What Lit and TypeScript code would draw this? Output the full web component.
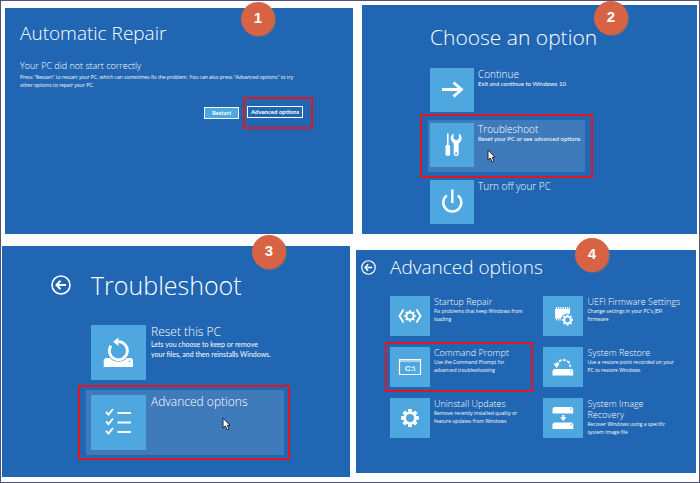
import { LitElement, html, svg, css, TemplateResult } from "lit";
import { customElement } from "lit/decorators.js";
import { classMap } from "lit/directives/class-map.js";

const gearPath = (cx: number, cy: number, r: number, tooth: number, hole: number) => {
  const pts: string[] = [];
  for (let i = 0; i < 8; i++) {
    const a = (i * Math.PI) / 4;
    [[-0.3, r], [-0.2, r + tooth], [0.2, r + tooth], [0.3, r]].forEach(([d, q]) =>
      pts.push(`${(cx + q * Math.sin(a + d)).toFixed(2)} ${(cy - q * Math.cos(a + d)).toFixed(2)}`));
  }
  return `M${pts.join("L")}ZM${cx - hole} ${cy}a${hole} ${hole} 0 1 0 ${2 * hole} 0a${hole} ${hole} 0 1 0 ${-2 * hole} 0Z`;
};

const drive = (y: number) => svg`<path d="M11 ${y}h18l1.200 1.800v4.700H9.500v-4.700z" fill="#fff"/>
  <circle cx="28" cy="${y + 2.3}" r=".7" fill="#4ea7de"/>`;

const icons: Record<string, TemplateResult> = {
  arrow: svg`<path d="M12 21.500H31.500M23.500 14.500l8 7-8 7" fill="none" stroke="#fff" stroke-width="2.800"/>`,
  tools: svg`<path fill="#fff" d="M17 10.500h1.600v11h-1.600zM15.500 23q0-1.500 2.300-1.500t2.300 1.500v8.500q0 1.200-1.200 1.200h-2.200q-1.200 0-1.200-1.200z"/>
    <path fill="#fff" fill-rule="evenodd" d="M23.500 10.500v5l2.700 2 2.700-2v-5q2.800 1.500 2.800 5 0 3-3 5v10q0 2.500-2.500 2.500t-2.500-2.500v-10q-3-2-3-5 0-3.500 2.800-5zM26.200 29.200a1.200 1.200 0 1 0 .01 0z"/>`,
  power: svg`<path d="M22.300 9.500v13.500M16.800 15.400a9 9 0 1 0 11 0" fill="none" stroke="#fff" stroke-width="2.400"/>`,
  reset: svg`<path d="M14.500 33h26l1.500 2v7H12.700v-7z" fill="#fff"/>
    <circle cx="27.300" cy="25.500" r="11.300" fill="#4ea7de"/>
    <path d="M27.500 16.700a9 9 0 1 1-7.600 4" fill="none" stroke="#fff" stroke-width="2.800"/><path d="M22 16.700l5.500-4.200v8.400z" fill="#fff"/>
    <circle cx="38.500" cy="36.300" r=".8" fill="#4ea7de"/>`,
  checklist: svg`<path d="M15 17l2.500 2.500 4.500-5.500M15 26.500l2.500 2.500 4.500-5.500M15 36l2.500 2.500 4.500-5.500M26.500 18H40M26.500 27.500H40M26.500 37H40" fill="none" stroke="#fff" stroke-width="1.900"/>`,
  repair: svg`<path d="M13.500 13.500l-4 6.500 4 6.500M26.500 13.500l4 6.500-4 6.500" fill="none" stroke="#fff" stroke-width="2"/>
    <path d="${gearPath(20, 20, 4.3, 1.500, 2.600)}" fill="#fff" fill-rule="evenodd"/>`,
  prompt: svg`<path d="M9.500 12.500h21v15h-21zM9.500 14h21" fill="none" stroke="#fff" stroke-width="1.200"/>
    <text x="20" y="24" text-anchor="middle" font-family="Liberation Sans" font-weight="700" font-size="8" fill="#fff">C:\\</text>`,
  gear: svg`<path d="${gearPath(20, 20, 6.600, 2.500, 4)}" fill="#fff" fill-rule="evenodd"/>`,
  firmware: svg`<path d="M12 13h15v9.500H12z" fill="#fff"/><path d="M13 12h14M13 23.500h8" stroke="#fff" stroke-width="2" stroke-dasharray="1.200 1"/>
    <circle cx="24.500" cy="24" r="6.500" fill="#4ea7de"/><path d="${gearPath(24.500, 24, 4, 1.600, 2.400)}" fill="#fff" fill-rule="evenodd"/>`,
  restore: svg`${drive(22)}<path d="M13.500 18a7 6.500 0 0 1 13.800 2" fill="none" stroke="#fff" stroke-width="1.800" stroke-dasharray="3 1.300"/>
    <path d="M10.500 16.500h6.200l-3.100 4.500z" fill="#fff"/>`,
  image: svg`${drive(9)}${drive(24.500)}<path d="M19.300 17h2v2.200h2.200l-3.200 3.800-3.200-3.800h2.200z" fill="#fff"/>`,
};

interface Option { icon: string; title: string; text?: string; marked?: boolean; pointer?: boolean }

@customElement("app-root")
export class AppRoot extends LitElement {
  static styles = css`
    :host { display: block; font-family: "Open Sans", "Noto Sans", sans-serif; color: #fff; }
    * { box-sizing: border-box; }
    h1, h2, p { margin: 0; font-weight: 300; }
    button { font: inherit; color: inherit; border: 0; background: none; padding: 0; text-align: left; }
    .frame { border: 1px solid #50527c; background: #fff; }
    .row { display: grid; }
    .upper { grid-template-columns: 348fr 335fr; gap: 9px; padding: 4px 2px 0 4px; }
    .lower { grid-template-columns: 348fr 340fr; gap: 6px; padding: 12px 3px 5px 1px; }
    .panel { position: relative; background: #2066b2; min-width: 0; }
    .badge { position: absolute; width: 34px; height: 34px; border-radius: 50%; background: #d86344; box-shadow: 1px 1px 1px #6b6b7a; font: 700 15px/32px "Liberation Sans", sans-serif; text-align: center; }
    .p1 { margin-top: 3px; padding: 13px 15px; }
    .p1 .badge { left: 236px; top: -6px; }
    .p1 h1 { font-size: 19px; line-height: 24px; }
    .p1 h2 { font-size: 9px; line-height: 14px; margin-top: 14px; }
    .p1 p { font-size: 5px; line-height: 8px; font-weight: 400; white-space: pre-line; }
    .actions { display: flex; align-items: center; margin: 8px 0 0 184px; gap: 4px; }
    .actions button { height: 12px; border: 1px solid #fff; font: 700 6px/8px Lato, sans-serif; text-align: center; }
    .restart { width: 35px; }
    .actions .restart { background: #4ea7de; }
    .more { width: 56px; }
    .ring { border: 2px solid #e3161f; }
    .actions .ring { padding: 7px 8px 9px 2px; display: flex; }

    .options { display: flex; flex-direction: column; align-items: flex-start; }
    .option { display: flex; position: relative; }
    .icon { flex: none; background: #4ea7de; display: block; }
    .name { display: block; font-weight: 300; white-space: pre-line; }
    .text { display: block; font-family: Lato, sans-serif; font-weight: 400; white-space: pre-line; }
    .pointer { position: absolute; }

    .p2 { padding: 18px 0 10px 58px; }
    .p2 .badge { left: 232px; top: -4px; }
    .p2 h1 { font-size: 21px; line-height: 28px; padding-left: 10px; }
    .p2 .options { margin-top: 17px; gap: 2px; }
    .p2 .option { margin-left: 10px; gap: 4px; }
    .p2 .icon { width: 44px; height: 44px; }
    .p2 .name { font-size: 10px; line-height: 12px; }
    .p2 .text { font-size: 6px; line-height: 8px; }
    .p2 .ring { padding: 4px 6px; }
    .p2 .ring .option { margin: 0; width: 157px; padding: 3px 2px 5px; background: #3f7abb; }
    .p2 .pointer { left: 59px; top: 29px; }

    .p3 { padding: 22px 0 17px 49px; }
    .p3 .badge { left: 250px; top: -11px; }
    .head { display: flex; align-items: center; }
    .back { display: flex; }
    .p3 .head { gap: 20px; }
    .p3 .back svg { width: 20px; height: 20px; }
    .p3 h1 { font-size: 25px; line-height: 34px; }
    .p3 .options { margin: 23px 0 0 27px; gap: 5px; }
    .p3 .option { margin-left: 13px; gap: 5px; }
    .p3 .icon { width: 55px; height: 55px; }
    .p3 .name { font-size: 12px; line-height: 14px; }
    .p3 .text { font-size: 7px; line-height: 10px; }
    .p3 .ring { padding: 3px 4px 3px 6px; }
    .p3 .ring .option { margin: 0; width: 198px; padding: 5px; background: #3f7abb; }
    .p3 .pointer { left: 136px; top: 27px; }

    .p4 { margin: 4px 0; padding: 4px 0 31px 5px; }
    .p4 .badge { left: 219px; top: -12px; }
    .p4 .head { gap: 14px; }
    .p4 .back svg { width: 15px; height: 15px; }
    .p4 h1 { font-size: 19px; line-height: 26px; }
    .columns { display: grid; grid-template-columns: 152fr 156fr; margin: 16px 0 0 24px; }
    .p4 .options { gap: 11px; }
    .p4 .option { margin-left: 5px; gap: 4px; }
    .p4 .icon { width: 40px; height: 40px; }
    .p4 .name { font-size: 9px; line-height: 11px; }
    .p4 .text { font-family: "Open Sans", sans-serif; font-size: 5px; line-height: 8px; }
    .p4 .ring { padding: 3px; margin: -5px 0; }
    .p4 .ring .option { margin: 0; width: 138px; }
  `;

  private option(o: Option, size: number) {
    const button = html`<button class="option">
      <svg class="icon" viewBox="0 0 ${size} ${size}" aria-hidden="true">${icons[o.icon]}</svg>
      <span><span class="name">${o.title}</span>${o.text ? html`<span class="text">${o.text}</span>` : ""}</span>
      ${o.pointer ? html`<svg class="pointer" width="9" height="14" viewBox="0 0 9 14" aria-hidden="true">
        <path d="M1 1v10l2.300-2 1.800 4 1.900-.9-1.800-3.700H8z" fill="#fff" stroke="#223" stroke-width="1"/></svg>` : ""}
    </button>`;
    return html`<div class=${classMap({ ring: !!o.marked })}>${button}</div>`;
  }

  private back() {
    return html`<button class="back" aria-label="Back"><svg viewBox="0 0 20 20" fill="none" stroke="#fff" stroke-width="1.600">
      <circle cx="10" cy="10" r="9"/><path d="M15 10H6M9.500 5.800L5.500 10l4 4.200" stroke-width="2"/></svg></button>`;
  }

  render() {
    return html`<main class="frame">
      <div class="row upper">
        <section class="panel p1">
          <span class="badge">1</span>
          <h1>Automatic Repair</h1>
          <h2>Your PC did not start correctly</h2>
          <p>${'Press "Restart" to restart your PC, which can sometimes fix the problem. You can also press "Advanced options" to try\nother options to repair your PC.'}</p>
          <div class="actions"><button class="restart">Restart</button><div class="ring"><button class="more">Advanced options</button></div></div>
        </section>
        <section class="panel p2">
          <span class="badge">2</span>
          <h1>Choose an option</h1>
          <div class="options">
            ${this.option({ icon: "arrow", title: "Continue", text: "Exit and continue to Windows 10" }, 44)}
            ${this.option({ icon: "tools", title: "Troubleshoot", text: "Reset your PC or see advanced options", marked: true, pointer: true }, 44)}
            ${this.option({ icon: "power", title: "Turn off your PC" }, 44)}
          </div>
        </section>
      </div>
      <div class="row lower">
        <section class="panel p3">
          <span class="badge">3</span>
          <div class="head">${this.back()}<h1>Troubleshoot</h1></div>
          <div class="options">
            ${this.option({ icon: "reset", title: "Reset this PC", text: "Lets you choose to keep or remove\nyour files, and then reinstalls Windows." }, 55)}
            ${this.option({ icon: "checklist", title: "Advanced options", marked: true, pointer: true }, 55)}
          </div>
        </section>
        <section class="panel p4">
          <span class="badge">4</span>
          <div class="head">${this.back()}<h1>Advanced options</h1></div>
          <div class="columns">
            <div class="options">
              ${this.option({ icon: "repair", title: "Startup Repair", text: "Fix problems that keep Windows from\nloading" }, 40)}
              ${this.option({ icon: "prompt", title: "Command Prompt", text: "Use the Command Prompt for\nadvanced troubleshooting", marked: true }, 40)}
              ${this.option({ icon: "gear", title: "Uninstall Updates", text: "Remove recently installed quality or\nfeature updates from Windows" }, 40)}
            </div>
            <div class="options">
              ${this.option({ icon: "firmware", title: "UEFI Firmware Settings", text: "Change settings in your PC's JEFI\nfirmware" }, 40)}
              ${this.option({ icon: "restore", title: "System Restore", text: "Use a restore point recorded on your\nPC to restore Windows" }, 40)}
              ${this.option({ icon: "image", title: "System Image\nRecovery", text: "Recover Windows using a specific\nsystem image file" }, 40)}
            </div>
          </div>
        </section>
      </div>
    </main>`;
  }
}
